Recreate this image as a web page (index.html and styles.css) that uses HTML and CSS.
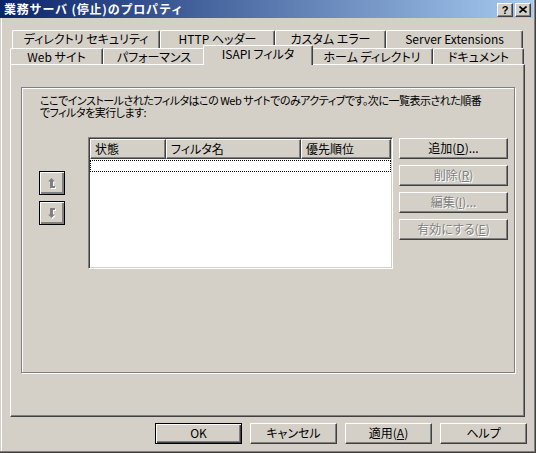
FILE: index.html
```html
<!DOCTYPE html>
<html lang="ja">
<head>
<meta charset="utf-8">
<title>業務サーバ (停止)のプロパティ</title>
<link rel="stylesheet" href="styles.css">
</head>
<body>
<div class="window">
  <div class="titlebar">
    <span class="title">業務サーバ (停止)のプロパティ</span>
    <div class="tbtns">
      <span class="tbtn help">?</span>
      <span class="tbtn close">
        <svg width="8" height="7" viewBox="0 0 8 7"><path d="M0.5 0.5 L7.5 6.5 M7.5 0.5 L0.5 6.5" stroke="#000" stroke-width="1.6" fill="none"/></svg>
      </span>
    </div>
  </div>

  <div class="tabs">
    <div class="tabrow back">
      <div class="tab t-dir">ディレクトリ セキュリティ</div>
      <div class="tab t-http">HTTP ヘッダー</div>
      <div class="tab t-err">カスタム エラー</div>
      <div class="tab t-ext">Server Extensions</div>
    </div>
    <div class="tabrow front">
      <div class="tab t-web">Web サイト</div>
      <div class="tab t-perf">パフォーマンス</div>
      <div class="tab t-isapi sel">ISAPI フィルタ</div>
      <div class="tab t-home">ホーム ディレクトリ</div>
      <div class="tab t-doc">ドキュメント</div>
    </div>
  </div>

  <div class="panel">
    <div class="group">
      <p class="desc">ここでインストールされたフィルタはこの Web サイトでのみアクティブです。次に一覧表示された順番<br>でフィルタを実行します:</p>
      <div class="content">
        <div class="updown">
          <div class="sqbtn">
            <svg width="9" height="12" viewBox="0 0 9 12">
              <polygon transform="translate(1,1)" points="3.5,0 7,3.5 5,3.5 5,8 7,8 7,10 2,10 2,3.5 0,3.5" fill="#fff"/>
              <polygon points="3.5,0 7,3.5 5,3.5 5,8 7,8 7,10 2,10 2,3.5 0,3.5" fill="#808080"/>
            </svg>
          </div>
          <div class="sqbtn">
            <svg width="9" height="12" viewBox="0 0 9 12">
              <polygon transform="translate(1,1)" points="2,0 7,0 7,2 5,2 5,6.5 7,6.5 3.5,10 0,6.5 2,6.5" fill="#fff"/>
              <polygon points="2,0 7,0 7,2 5,2 5,6.5 7,6.5 3.5,10 0,6.5 2,6.5" fill="#808080"/>
            </svg>
          </div>
        </div>
        <div class="list">
          <div class="lhead">
            <div class="hcell c-state">状態</div>
            <div class="hcell c-name">フィルタ名</div>
            <div class="hcell c-prio">優先順位</div>
          </div>
          <div class="focusrow"></div>
        </div>
        <div class="actions">
          <div class="btn">追加(<u>D</u>)...</div>
          <div class="btn disabled">削除(<u>R</u>)</div>
          <div class="btn disabled">編集(<u>I</u>)...</div>
          <div class="btn disabled">有効にする(<u>E</u>)</div>
        </div>
      </div>
    </div>
  </div>

  <div class="footer">
    <div class="btn fbtn default">OK</div>
    <div class="btn fbtn">キャンセル</div>
    <div class="btn fbtn">適用(<u>A</u>)</div>
    <div class="btn fbtn">ヘルプ</div>
  </div>
</div>
</body>
</html>
```

FILE: styles.css
```css
* { box-sizing: border-box; }

body {
  margin: 0;
  background: #d4d0c8;
  font-family: "Noto Sans CJK JP", "Noto Sans", sans-serif;
  font-size: 12px;
  font-feature-settings: "palt";
  color: #000;
}

.window {
  width: 536px;
  height: 453px;
  background: #d4d0c8;
  border-right: 1px solid #404040;
  border-bottom: 1px solid #404040;
  box-shadow: inset -1px -1px 0 #808080, inset 1px 0 0 #d4d0c8, inset 2px 0 0 #fff;
  display: flex;
  flex-direction: column;
}

/* Title bar */
.titlebar {
  height: 18px;
  margin-right: 2px;
  background: linear-gradient(to right, #0a246a, #a6caf0);
  display: flex;
  align-items: center;
  justify-content: space-between;
  padding: 0 2px 0 4px;
}
.title {
  color: #fff;
  font-weight: bold;
  font-size: 12px;
  line-height: 14px;
  font-feature-settings: "palt" 0;
  letter-spacing: 0.8px;
}
.tbtns { display: flex; margin-top: 1px; }
.tbtn {
  width: 16px;
  height: 14px;
  background: #d4d0c8;
  border: 1px solid;
  border-color: #fff #404040 #404040 #fff;
  box-shadow: inset -1px -1px 0 #808080;
  display: flex;
  align-items: center;
  justify-content: center;
  font: bold 11px "Liberation Sans", sans-serif;
  line-height: 12px;
}
.tbtn.close { margin-left: 2px; }

/* Tabs */
.tabs {
  margin: 12px 0 0 10px;
  width: 515px;
}
.tabrow { display: flex; }
.tabrow.back { height: 18px; padding-left: 2px; }
.tabrow.front { height: 16px; }

.tab {
  flex: none;
  background: #d4d0c8;
  border-top: 1px solid #fff;
  border-left: 1px solid #fff;
  border-right: 1px solid #404040;
  box-shadow: inset -1px 0 0 #808080;
  border-radius: 2px 2px 0 0;
  text-align: center;
  line-height: 14px;
  padding-top: 1px;
  white-space: nowrap;
}
.t-dir { width: 148px; }
.t-http { width: 115px; }
.t-err { width: 111px; }
.t-ext { width: 137px; }
.t-web { width: 93px; }
.t-perf { width: 102px; }
.t-isapi { width: 106px; }
.t-home { width: 122px; }
.t-doc { width: 91px; }

.tab.sel {
  width: 110px;
  margin: -3px -2px -1px;
  position: relative;
  z-index: 2;
  padding-top: 1px;
}

/* Panel */
.panel {
  width: 515px;
  height: 353px;
  border-top: 1px solid #fff;
  border-left: 1px solid #fff;
  border-right: 1px solid #404040;
  border-bottom: 1px solid #404040;
  box-shadow: inset -1px -1px 0 #808080;
  margin-left: 10px;
}

.group {
  margin: 22px 0 0 10px;
  width: 494px;
  height: 286px;
  border: 1px solid #808080;
  box-shadow: inset 1px 1px 0 #fff, 1px 1px 0 #fff;
  padding: 6px 0 0 17px;
}

.desc {
  margin: 0 0 0 1px;
  font-size: 11px;
  line-height: 12px;
  white-space: nowrap;
  letter-spacing: -0.5px;
}

.content {
  display: flex;
  margin-top: 19px;
}

.updown {
  width: 26px;
  padding-top: 34px;
  display: flex;
  flex-direction: column;
  gap: 6px;
}
.sqbtn {
  width: 26px;
  height: 24px;
  border: 1px solid #000;
  background: #d4d0c8;
  box-shadow: inset 1px 1px 0 #fff, inset -1px -1px 0 #808080, inset -2px -2px 0 #808080;
  display: flex;
  align-items: center;
  justify-content: center;
  padding: 1px 0 0 1px;
}

.list {
  width: 305px;
  height: 132px;
  margin-left: 23px;
  background: #fff;
  border: 1px solid;
  border-color: #808080 #fff #fff #808080;
  box-shadow: inset 1px 1px 0 #404040, inset -1px -1px 0 #d4d0c8;
  padding: 1px;
}
.lhead { display: flex; height: 20px; }
.hcell {
  background: #d4d0c8;
  border-top: 1px solid #fff;
  border-left: 1px solid #fff;
  border-right: 1px solid #404040;
  border-bottom: 1px solid #404040;
  box-shadow: inset -1px -1px 0 #808080;
  padding: 2px 0 0 4px;
  line-height: 14px;
  white-space: nowrap;
}
.c-state { width: 76px; }
.c-name { width: 135px; }
.c-prio { width: 90px; }

.focusrow {
  margin-top: 1px;
  height: 12px;
  border: 1px dotted #000;
}

.actions {
  margin-left: 6px;
  margin-top: 1px;
  display: flex;
  flex-direction: column;
  gap: 6px;
}

.btn {
  width: 109px;
  height: 21px;
  background: #d4d0c8;
  border: 1px solid;
  border-color: #fff #404040 #404040 #fff;
  box-shadow: inset -1px -1px 0 #808080;
  text-align: center;
  line-height: 18px;
  white-space: nowrap;
}
.btn u { text-underline-offset: 1px; }
.btn.disabled {
  color: #808080;
  text-shadow: 1px 1px 0 #fff;
}

/* Footer */
.footer {
  display: flex;
  gap: 8px;
  padding-left: 155px;
  margin-top: 6px;
}
.fbtn { width: 87px; }
.fbtn.default {
  border: 1px solid #000;
  box-shadow: inset 1px 1px 0 #fff, inset -1px -1px 0 #404040, inset -2px -2px 0 #808080;
}
```
